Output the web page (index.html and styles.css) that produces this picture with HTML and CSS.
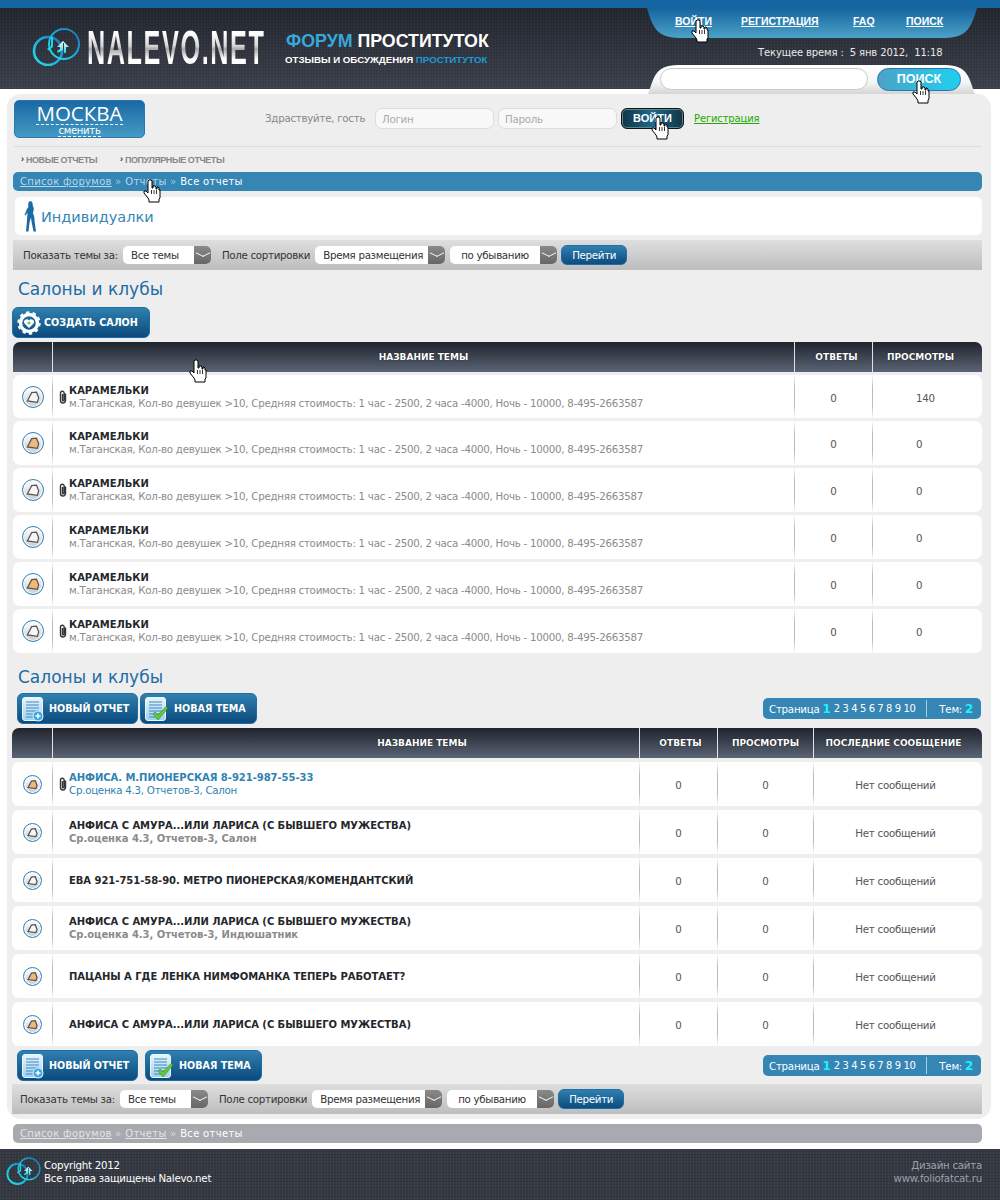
FILE: index.html
```html
<!DOCTYPE html>
<html lang="ru">
<head>
<meta charset="utf-8">
<title>Nalevo.net</title>
<link rel="stylesheet" href="styles.css">
</head>
<body>
<svg class="defs" width="0" height="0">
  <defs>
    <linearGradient id="lg" x1="0" y1="1" x2="1" y2="0"><stop offset="0" stop-color="#1fe6f2"/><stop offset=".6" stop-color="#19a6d8"/><stop offset="1" stop-color="#1a6fae"/></linearGradient>
    <linearGradient id="arr" x1="0" y1="0" x2="0" y2="1"><stop offset="0" stop-color="#fff"/><stop offset="1" stop-color="#1fd3ea"/></linearGradient>
    <linearGradient id="doc" x1="0" y1="0" x2="0" y2="1"><stop offset="0" stop-color="#e8f4fb"/><stop offset="1" stop-color="#9fd0ee"/></linearGradient>
    <symbol id="hand" viewBox="0 0 18 24">
      <path d="M6 1h2l1 1v7h1V7h2l1 1v2h1V8h1l1 1v2h1v8l-1 1v3H6v-2l-1-2-4-5v-2h2l2 2V2z" fill="#fff" stroke="#000" stroke-width="1"/>
      <path d="M8.500 11v4M11 11v4M13.500 11v4" stroke="#000" stroke-width=".8"/>
    </symbol>
    <symbol id="logo" viewBox="0 0 50 38">
      <circle cx="16" cy="23" r="14" fill="none" stroke="url(#lg)" stroke-width="2.600"/>
      <circle cx="32" cy="16" r="15" fill="none" stroke="url(#lg)" stroke-width="2"/>
      <path d="M19 9v9l-4 3 1.500 1.500 4.500-3.500V9z" fill="#1fd3ea"/>
      <path d="M31 13l-6 6h3v2l-3 2 1 2 5-3 0-7h1l0 10h2V19h3z" fill="url(#arr)"/>
    </symbol>
    <symbol id="clip" viewBox="0 0 8 14">
      <path d="M6.500 3.500v7a2.500 2.500 0 0 1-5 0V3a1.800 1.800 0 0 1 3.600 0v7a.8.8 0 0 1-1.600 0V4" fill="none" stroke="#33363b" stroke-width="1.400"/>
    </symbol>
    <symbol id="doc-icon" viewBox="0 0 22 24">
      <rect x=".5" y=".5" width="20" height="23" rx="2.500" fill="url(#doc)" stroke="#eaf5fb"/>
      <path d="M4 5h13M4 8h13M4 11h13M4 14h13M4 17h13M4 20h10" stroke="#3d88c4" stroke-width="1.200"/>
    </symbol>
    <symbol id="thumb" viewBox="0 0 16 16">
      <path d="M1.500 12.500L6.500 3 12 2.500 14.500 9 13 14z"/>
    </symbol>
  </defs>
</svg>

<header class="site-header">
  <div class="brand">
    <svg class="brand-logo"><use href="#logo"/></svg>
    <div class="brand-name"><span class="brand-text">NALEVO.NET</span></div>
    <div class="tagline">
      <div class="tagline-top"><span class="accent">ФОРУМ</span> ПРОСТИТУТОК</div>
      <div class="tagline-sub">ОТЗЫВЫ И ОБСУЖДЕНИЯ <span class="accent2">ПРОСТИТУТОК</span></div>
    </div>
  </div>
  <div class="header-side">
    <nav class="top-tabs">
      <a class="tab tab-login">ВОЙТИ</a>
      <a class="tab tab-reg">РЕГИСТРАЦИЯ</a>
      <a class="tab tab-faq">FAQ</a>
      <a class="tab">ПОИСК</a>
    </nav>
    <div class="clock">Текущее время :&nbsp; 5 янв 2012,&nbsp; 11:18</div>
    <div class="search-panel">
      <div class="search-input"></div>
      <div class="search-btn">ПОИСК</div>
    </div>
  </div>
</header>

<main class="panel">
  <div class="login-row">
    <div class="city"><span class="city-name">МОСКВА</span><span class="city-change">сменить</span></div>
    <div class="greet">Здраствуйте, гость</div>
    <div class="field">Логин</div>
    <div class="field">Пароль</div>
    <div class="login-btn">ВОЙТИ</div>
    <a class="reg-link">Регистрация</a>
  </div>
  <nav class="sub-nav">
    <a class="sub-link sub-first">НОВЫЕ ОТЧЕТЫ</a>
    <a class="sub-link">ПОПУЛЯРНЫЕ ОТЧЕТЫ</a>
  </nav>
  <div class="crumbs"><a class="crumb-link">Список форумов</a> <span class="raquo">»</span> <a>Отчеты</a> <span class="raquo">»</span> <span class="crumb-now">Все отчеты</span></div>
  <div class="category">
    <svg class="lady" viewBox="0 0 16 31"><path d="M7 0c1.500 0 2.500 1 2.500 2.500 0 1 .5 2 .5 3 1 1 1 2.500 .5 4 0 1-.5 2-.5 3 1 1.500 1.500 4 1.500 7l1.500 11h-2.500l-2-10-.5-4-1.500 5-1 9H3l1-11c0-3 .5-6 .5-8l-2 3-1-.5 2.500-6c.5-1 1-1.500 1.500-2-.5-1.500-.5-6 2-6z" fill="#1c6aa4"/></svg>
    <span class="category-name">Индивидуалки</span>
  </div>
  <div class="filter">
    <span>Показать темы за:</span>
    <div class="select s1">Все темы<i class="arrow"></i></div>
    <span class="filter-label">Поле сортировки</span>
    <div class="select s2">Время размещения<i class="arrow"></i></div>
    <div class="select s3">по убыванию<i class="arrow"></i></div>
    <div class="go">Перейти</div>
  </div>
  <h2 class="section-title">Салоны и клубы</h2>
  <div class="btn-row">
    <a class="btn btn-create">
      <svg class="gear" viewBox="0 0 24 24">
        <circle cx="12" cy="12" r="8.500" fill="none" stroke="#fff" stroke-width="3.400"/>
        <circle cx="12" cy="12" r="10.500" fill="none" stroke="#fff" stroke-width="2.400" stroke-dasharray="3.300 3.300"/>
        <path d="M12 17l-4.500-4.500a2.700 2.700 0 0 1 4.500-3 2.700 2.700 0 0 1 4.500 3z" fill="#fff"/>
        <path d="M12 10.500v3M10.500 12h3" stroke="#35c21e" stroke-width="1.100"/>
      </svg>
      СОЗДАТЬ САЛОН
    </a>
  </div>

  <section class="topics t1">
    <div class="thead"><div></div><div>НАЗВАНИЕ ТЕМЫ</div><div class="th-a">ОТВЕТЫ</div><div class="th-v">ПРОСМОТРЫ</div></div>
    <div class="trow"><div class="c-ic"><span class="topic-ic"><svg><use href="#thumb"/></svg></span></div><div class="c-t"><svg class="clip"><use href="#clip"/></svg><div class="t-title">КАРАМЕЛЬКИ</div><div class="t-sub">м.Таганская, Кол-во девушек &gt;10, Средняя стоимость: 1 час - 2500, 2 часа -4000, Ночь - 10000, 8-495-2663587</div></div><div class="c-n">0</div><div class="c-n c-v">140</div></div>
    <div class="trow"><div class="c-ic"><span class="topic-ic hot"><svg><use href="#thumb"/></svg></span></div><div class="c-t"><div class="t-title">КАРАМЕЛЬКИ</div><div class="t-sub">м.Таганская, Кол-во девушек &gt;10, Средняя стоимость: 1 час - 2500, 2 часа -4000, Ночь - 10000, 8-495-2663587</div></div><div class="c-n">0</div><div class="c-n c-v">0</div></div>
    <div class="trow"><div class="c-ic"><span class="topic-ic"><svg><use href="#thumb"/></svg></span></div><div class="c-t"><svg class="clip"><use href="#clip"/></svg><div class="t-title">КАРАМЕЛЬКИ</div><div class="t-sub">м.Таганская, Кол-во девушек &gt;10, Средняя стоимость: 1 час - 2500, 2 часа -4000, Ночь - 10000, 8-495-2663587</div></div><div class="c-n">0</div><div class="c-n c-v">0</div></div>
    <div class="trow"><div class="c-ic"><span class="topic-ic"><svg><use href="#thumb"/></svg></span></div><div class="c-t"><div class="t-title">КАРАМЕЛЬКИ</div><div class="t-sub">м.Таганская, Кол-во девушек &gt;10, Средняя стоимость: 1 час - 2500, 2 часа -4000, Ночь - 10000, 8-495-2663587</div></div><div class="c-n">0</div><div class="c-n c-v">0</div></div>
    <div class="trow"><div class="c-ic"><span class="topic-ic hot"><svg><use href="#thumb"/></svg></span></div><div class="c-t"><div class="t-title">КАРАМЕЛЬКИ</div><div class="t-sub">м.Таганская, Кол-во девушек &gt;10, Средняя стоимость: 1 час - 2500, 2 часа -4000, Ночь - 10000, 8-495-2663587</div></div><div class="c-n">0</div><div class="c-n c-v">0</div></div>
    <div class="trow"><div class="c-ic"><span class="topic-ic"><svg><use href="#thumb"/></svg></span></div><div class="c-t"><svg class="clip"><use href="#clip"/></svg><div class="t-title">КАРАМЕЛЬКИ</div><div class="t-sub">м.Таганская, Кол-во девушек &gt;10, Средняя стоимость: 1 час - 2500, 2 часа -4000, Ночь - 10000, 8-495-2663587</div></div><div class="c-n">0</div><div class="c-n c-v">0</div></div>
  </section>

  <h2 class="section-title second">Салоны и клубы</h2>
  <div class="toolbar">
    <div class="btn-group">
      <a class="btn btn-report"><svg class="doc"><use href="#doc-icon"/><circle cx="17" cy="19" r="5" fill="#3ea5de" stroke="#dff2fb"/><path d="M14.500 19h5M17 16.500v5" stroke="#fff" stroke-width="1.500"/></svg>НОВЫЙ ОТЧЕТ</a>
      <a class="btn btn-topic"><svg class="doc"><use href="#doc-icon"/><path d="M9 17l5 6 10-12-2-1.500-8 8.500-3-3z" fill="#62c93a" stroke="#2f8a1c" stroke-width=".6"/></svg>НОВАЯ ТЕМА</a>
    </div>
    <div class="pager">Страница <b>1</b> <span class="pages">2 3 4 5 6 7 8 9 10</span><i class="pager-sep"></i>Тем: <b class="b2">2</b></div>
  </div>

  <section class="topics t2">
    <div class="thead"><div></div><div class="th-name">НАЗВАНИЕ ТЕМЫ</div><div class="th-a2">ОТВЕТЫ</div><div>ПРОСМОТРЫ</div><div class="th-l">ПОСЛЕДНИЕ СООБЩЕНИЕ</div></div>
    <div class="trow"><div class="c-ic"><span class="topic-ic small hot"><svg><use href="#thumb"/></svg></span></div><div class="c-t"><svg class="clip"><use href="#clip"/></svg><div class="t-title link">АНФИСА. М.ПИОНЕРСКАЯ 8-921-987-55-33</div><div class="t-sub link">Ср.оценка 4.3, Отчетов-3, Салон</div></div><div class="c-n">0</div><div class="c-n">0</div><div class="c-n c-l">Нет сообщений</div></div>
    <div class="trow"><div class="c-ic"><span class="topic-ic small"><svg><use href="#thumb"/></svg></span></div><div class="c-t"><div class="t-title">АНФИСА С АМУРА...ИЛИ ЛАРИСА (С БЫВШЕГО МУЖЕСТВА)</div><div class="t-sub strong">Ср.оценка 4.3, Отчетов-3, Салон</div></div><div class="c-n">0</div><div class="c-n">0</div><div class="c-n c-l">Нет сообщений</div></div>
    <div class="trow"><div class="c-ic"><span class="topic-ic small"><svg><use href="#thumb"/></svg></span></div><div class="c-t"><div class="t-title">ЕВА 921-751-58-90. МЕТРО ПИОНЕРСКАЯ/КОМЕНДАНТСКИЙ</div></div><div class="c-n">0</div><div class="c-n">0</div><div class="c-n c-l">Нет сообщений</div></div>
    <div class="trow"><div class="c-ic"><span class="topic-ic small"><svg><use href="#thumb"/></svg></span></div><div class="c-t"><div class="t-title">АНФИСА С АМУРА...ИЛИ ЛАРИСА (С БЫВШЕГО МУЖЕСТВА)</div><div class="t-sub strong">Ср.оценка 4.3, Отчетов-3, Индюшатник</div></div><div class="c-n">0</div><div class="c-n">0</div><div class="c-n c-l">Нет сообщений</div></div>
    <div class="trow"><div class="c-ic"><span class="topic-ic small hot"><svg><use href="#thumb"/></svg></span></div><div class="c-t"><div class="t-title">ПАЦАНЫ А ГДЕ ЛЕНКА НИМФОМАНКА ТЕПЕРЬ РАБОТАЕТ?</div></div><div class="c-n">0</div><div class="c-n">0</div><div class="c-n c-l">Нет сообщений</div></div>
    <div class="trow"><div class="c-ic"><span class="topic-ic small hot"><svg><use href="#thumb"/></svg></span></div><div class="c-t"><div class="t-title">АНФИСА С АМУРА...ИЛИ ЛАРИСА (С БЫВШЕГО МУЖЕСТВА)</div></div><div class="c-n">0</div><div class="c-n">0</div><div class="c-n c-l">Нет сообщений</div></div>
  </section>

  <div class="toolbar bottom">
    <div class="btn-group wide">
      <a class="btn btn-report"><svg class="doc"><use href="#doc-icon"/><circle cx="17" cy="19" r="5" fill="#3ea5de" stroke="#dff2fb"/><path d="M14.500 19h5M17 16.500v5" stroke="#fff" stroke-width="1.500"/></svg>НОВЫЙ ОТЧЕТ</a>
      <a class="btn btn-topic"><svg class="doc"><use href="#doc-icon"/><path d="M9 17l5 6 10-12-2-1.500-8 8.500-3-3z" fill="#62c93a" stroke="#2f8a1c" stroke-width=".6"/></svg>НОВАЯ ТЕМА</a>
    </div>
    <div class="pager">Страница <b>1</b> <span class="pages">2 3 4 5 6 7 8 9 10</span><i class="pager-sep"></i>Тем: <b class="b2">2</b></div>
  </div>
  <div class="filter filter-bottom">
    <span>Показать темы за:</span>
    <div class="select s1">Все темы<i class="arrow"></i></div>
    <span class="filter-label">Поле сортировки</span>
    <div class="select s2">Время размещения<i class="arrow"></i></div>
    <div class="select s3">по убыванию<i class="arrow"></i></div>
    <div class="go">Перейти</div>
  </div>
</main>

<div class="crumbs crumbs-bottom"><a class="crumb-link">Список форумов</a> <span class="raquo">»</span> <a class="crumb-link">Отчеты</a> <span class="raquo">»</span> <span class="crumb-now">Все отчеты</span></div>

<footer class="site-footer">
  <svg class="foot-logo"><use href="#logo"/></svg>
  <div class="foot-copy">Copyright 2012<br>Все права защищены Nalevo.net</div>
  <div class="foot-design">Дизайн сайта<br>www.foliofatcat.ru</div>
</footer>

<svg class="cursor c1"><use href="#hand"/></svg>
<svg class="cursor c2"><use href="#hand"/></svg>
<svg class="cursor c3"><use href="#hand"/></svg>
<svg class="cursor c4"><use href="#hand"/></svg>
<svg class="cursor c5"><use href="#hand"/></svg>
</body>
</html>
```

FILE: styles.css
```css
* { box-sizing: border-box; }
html, body { margin: 0; padding: 0; }
body {
  position: relative;
  width: 1000px;
  height: 1200px;
  overflow: hidden;
  background: #fff;
  font-family: "DejaVu Sans", sans-serif;
  font-size: 10.250px;
  letter-spacing: -.26px;
  color: #333;
}
.defs { position: absolute; }
a { color: inherit; }

/* header */
.site-header {
  height: 89px;
  border-top: 8px solid #1665a3;
  display: flex;
  justify-content: space-between;
  color: #fff;
  background:
    repeating-linear-gradient(90deg, rgba(255,255,255,.025) 0 1px, transparent 1px 3px),
    repeating-linear-gradient(0deg, rgba(0,0,0,.08) 0 1px, transparent 1px 3px),
    linear-gradient(#22262f, #3c424d);
}
.brand { display: flex; align-items: flex-start; padding-left: 32px; }
.brand-logo { width: 50px; height: 38px; margin-top: 20px; }
.brand-name { width: 178px; margin: 14px 0 0 5px; }
.brand-text {
  display: inline-block;
  font-family: "Liberation Sans", sans-serif;
  font-size: 49px;
  line-height: 50px;
  font-weight: 700;
  letter-spacing: 3px;
  white-space: nowrap;
  transform: scaleX(.516);
  transform-origin: left top;
  background: linear-gradient(#fff 22%, #d5d5d5 48%, #a8a8a8 54%, #fff 75%);
  -webkit-background-clip: text;
  background-clip: text;
  color: transparent;
}
.tagline { margin: 23px 0 0 21px; font-family: "Liberation Sans", sans-serif; font-weight: 700; letter-spacing: 0; }
.tagline-top { font-size: 17.800px; line-height: 21px; white-space: nowrap; }
.tagline-sub { font-size: 9.700px; line-height: 14px; margin: 1px 0 0 -1px; white-space: nowrap; }
.accent { color: #37a8db; }
.accent2 { color: #1f9ad8; }

.header-side { width: 353px; flex: none; position: relative; z-index: 2; height: 86px; }
.top-tabs {
  width: 330px;
  height: 30px;
  display: flex;
  padding: 7px 0 0 28px;
  background: linear-gradient(#16639f, #4aa3c8);
  clip-path: path('M0 0H330C325 16 322 30 298 30H32C8 30 5 16 0 0Z');
  font-family: "Liberation Sans", sans-serif;
  font-weight: 700;
  font-size: 10.500px;
  letter-spacing: 0;
  line-height: 13px;
}
.tab { text-decoration: underline; white-space: nowrap; }
.tab-login { width: 66px; }
.tab-reg { width: 112px; }
.tab-faq { width: 53px; }
.clock {
  margin: 8px 0 0 111px;
  line-height: 14px;
  font-size: 10px;
  letter-spacing: -.13px;
  color: #e8e8e8;
  white-space: nowrap;
}
.search-panel {
  margin: 5px 0 0 1px;
  width: 327px;
  height: 29px;
  display: flex;
  padding: 3px 0 0 12px;
  background: linear-gradient(#fff, #f5f5f5 60%, #d5d5d5);
  clip-path: path('M0 29C6 14 6 0 30 0H297C321 0 321 14 327 29Z');
}
.search-input {
  width: 208px;
  height: 22px;
  border: 1px solid #c9c9d2;
  border-radius: 11px;
  background: #fff;
}
.search-btn {
  margin-left: 9px;
  width: 84px;
  height: 23px;
  border: 1px solid #2c74ad;
  border-radius: 12px;
  background: linear-gradient(90deg, #4aa3c8, #20cfee);
  color: #fff;
  font-family: "Liberation Sans", sans-serif;
  font-weight: 700;
  font-size: 12.500px;
  letter-spacing: 0;
  line-height: 21px;
  text-align: center;
}

/* panel */
.panel {
  margin: 5px 0 0 7px;
  width: 984px;
  height: 1025px;
  padding: 6px 9px 0 6px;
  background: #eee;
  border-radius: 14px;
}
.login-row {
  height: 47px;
  margin-left: 1px;
  padding-bottom: 8px;
  border-bottom: 1px solid #dedede;
  display: flex;
  align-items: flex-start;
}
.city {
  width: 131px;
  height: 38px;
  border: 1px solid #2a77ad;
  border-radius: 5px;
  background: linear-gradient(#1a68a5, #449bc4);
  color: #fff;
  text-align: center;
  display: flex;
  flex-direction: column;
  align-items: center;
}
.city-name {
  font-family: "Open Sans", sans-serif;
  font-size: 20.500px;
  letter-spacing: 0;
  line-height: 22px;
  border-bottom: 1px dashed #fff;
  height: 23px;
  margin-top: 1px;
}
.city-change { font-size: 10px; line-height: 11px; border-bottom: 1px dashed #fff; }
.greet { margin: 11px 0 0 120px; width: 110px; line-height: 14px; color: #888; white-space: nowrap; }
.field {
  width: 119px;
  height: 21px;
  margin: 8px 4px 0 0;
  padding-left: 6px;
  border: 1px solid #ddd;
  border-radius: 7px;
  background: #f8f8f8;
  color: #aaa;
  line-height: 20px;
}
.login-btn {
  width: 63px;
  height: 21px;
  margin: 8px 0 0 0;
  border: 1px solid #111;
  border-radius: 6px;
  box-shadow: inset 0 0 0 1px #5d8a8c;
  background: linear-gradient(90deg, #123344, #1c6a8e 50%, #123344);
  color: #fff;
  font-family: "Liberation Sans", sans-serif;
  font-weight: 700;
  font-size: 11px;
  letter-spacing: 0;
  line-height: 19px;
  text-align: center;
}
.reg-link { margin: 12px 0 0 10px; color: #22a800; text-decoration: underline; line-height: 13px; font-size: 10px; letter-spacing: -.15px; white-space: nowrap; }
.sub-nav {
  height: 25px;
  display: flex;
  align-items: center;
  padding-left: 8px;
  color: #888;
  font-family: "Liberation Sans", sans-serif;
  font-weight: 700;
  font-size: 9px;
  letter-spacing: -.45px;
}
.sub-link { white-space: nowrap; padding-left: 5px; position: relative; }
.sub-link::before { content: "›"; position: absolute; left: 0; top: -1px; color: #333; }
.sub-first { width: 99px; }
.crumbs {
  height: 19px;
  padding-left: 7px;
  border-radius: 5px;
  background: #3585b5;
  color: #b9d8ea;
  font-size: 10px;
  line-height: 19px;
  letter-spacing: .32px;
  white-space: nowrap;
}
.crumb-link { text-decoration: underline; }
.crumb-now { color: #fff; }
.raquo { opacity: .8; }
.category {
  height: 38px;
  margin: 6px 0 0 2px;
  padding: 2px 0 0 8px;
  border-radius: 5px;
  background: #fff;
  display: flex;
  align-items: center;
}
.lady { width: 16px; height: 31px; margin: -2px 2px 0 0; flex: none; }
.category-name { font-size: 14.500px; letter-spacing: 0; color: #3585b5; }
.filter {
  height: 30px;
  margin-top: 5px;
  padding-left: 10px;
  display: flex;
  align-items: center;
  background: linear-gradient(#dedede, #bdbdbd);
  color: #333;
  letter-spacing: -.3px;
  white-space: nowrap;
}
.filter-bottom { margin: 3px 0 0 -1px; padding-left: 8px; }
.select {
  position: relative;
  height: 18px;
  margin-left: 5px;
  padding-left: 8px;
  border-radius: 5px;
  background: #fff;
  line-height: 18px;
}
.s1 { width: 88px; }
.s2 { width: 130px; }
.s3 { width: 107px; padding-left: 11px; }
.arrow {
  position: absolute;
  right: 0;
  top: 0;
  width: 17px;
  height: 18px;
  border-radius: 0 5px 5px 0;
  background: linear-gradient(#8a8a8a, #666);
}
.arrow::after {
  content: "";
  position: absolute;
  left: 5px;
  top: 3px;
  width: 7px;
  height: 7px;
  border-right: 1px solid #fff;
  border-bottom: 1px solid #fff;
  transform: rotate(45deg) skew(-18deg, -18deg);
}
.filter-label { margin-left: 11px; }
.go {
  width: 66px;
  height: 20px;
  margin-left: 4px;
  border: 1px solid #1f6da6;
  border-radius: 6px;
  background: linear-gradient(#2f80b0, #0c4c7e);
  color: #fff;
  line-height: 18px;
  text-align: center;
}
.section-title {
  height: 37px;
  margin: 0 0 0 5px;
  color: #1d6ca5;
  font-size: 17px;
  letter-spacing: 0;
  font-weight: 400;
  line-height: 38px;
}
.second { height: 35px; margin-top: 5px; }
.btn-row { height: 31px; margin-left: -1px; }
.btn {
  height: 31px;
  display: inline-flex;
  align-items: center;
  border: 1px solid #1f6da6;
  border-radius: 6px;
  background: linear-gradient(#2f80b0, #0b4a7c);
  color: #fff;
  font-family: "DejaVu Sans", sans-serif;
  font-weight: 700;
  font-size: 9.600px;
  letter-spacing: 0;
  white-space: nowrap;
}
.btn-create { width: 138px; padding-left: 4px; }
.gear { width: 24px; height: 24px; margin-right: 3px; flex: none; }
.btn-report { width: 121px; padding-left: 3px; }
.btn-topic { width: 117px; padding-left: 3px; }
.doc { width: 24px; height: 24px; margin-right: 4px; flex: none; overflow: visible; }
.btn-topic .doc { margin-right: 6px; }

.topics { margin-top: 4px; }
.t2 { margin: 4px 0 0 -1px; }
.thead {
  height: 30px;
  display: grid;
  border-radius: 7px 7px 0 0;
  background: linear-gradient(#20242d, #5a6475);
  color: #fff;
  font-weight: 700;
  font-size: 9px;
  letter-spacing: 0;
  line-height: 30px;
  text-align: center;
  text-shadow: 0 0 1px #000;
}
.thead > div + div { border-left: 1px solid #dfe3e8; }
.t1 .thead, .t1 .trow { grid-template-columns: 39px 742px 78px 110px; }
.t2 .thead, .t2 .trow { grid-template-columns: 40px 587px 78px 96px 168px; }
.th-a { padding-left: 6px; }
.th-v { padding-right: 14px; }
.th-name { padding-left: 152px; }
.th-a2 { padding-left: 4px; }
.th-l { padding-right: 8px; }
.trow {
  height: 44px;
  margin-top: 4px;
  display: grid;
  border-radius: 7px;
  background: #fff;
}
.t1 .trow { margin-top: 3px; }
.t1 .thead + .trow { height: 43px; }
.trow > div + div {
  border-left: 1px solid;
  border-image: linear-gradient(transparent, #bbb 30%, #bbb 70%, transparent) 1;
}
.c-ic { display: flex; align-items: center; justify-content: center; }
.topic-ic {
  width: 22px;
  height: 22px;
  padding: 3px;
  border: 1px solid #2f7fb3;
  border-radius: 50%;
  background: linear-gradient(#fff, #c9ced2);
  box-shadow: inset 0 0 0 1px #fff;
}
.topic-ic svg { display: block; width: 14px; height: 14px; fill: #f6f6f6; stroke: #555; stroke-width: 1.400; }
.topic-ic.hot svg { fill: #f3b878; }
.topic-ic.small { width: 19px; height: 19px; padding: 3px; }
.topic-ic.small svg { width: 11px; height: 11px; stroke-width: 1.900; }
.c-t {
  position: relative;
  padding-left: 16px;
  display: flex;
  flex-direction: column;
  justify-content: center;
  white-space: nowrap;
}
.clip { position: absolute; left: 6px; top: 15px; width: 8px; height: 14px; }
.t-title { font-weight: 700; font-size: 10px; letter-spacing: -.04px; line-height: 13px; color: #24272c; }
.t-sub { line-height: 13px; color: #8b8b8b; }
.t-sub.strong { font-weight: 700; font-size: 10px; letter-spacing: -.04px; }
.t-title.link, .t-sub.link { color: #2f82b3; }
.c-n { display: flex; align-items: center; justify-content: center; padding-top: 2px; color: #555; }
.c-v { justify-content: flex-start; padding-left: 43px; }
.c-l { padding-right: 4px; }

.toolbar { display: flex; justify-content: space-between; align-items: center; height: 31px; margin-right: 1px; }
.toolbar .btn-group { display: flex; gap: 2px; margin-left: 4px; }
.toolbar .btn-group.wide { gap: 7px; }
.bottom { margin-top: 4px; }
.pager {
  height: 21px;
  width: 218px;
  padding-left: 6px;
  display: flex;
  align-items: center;
  gap: 3px;
  border-radius: 5px;
  background: #3585b5;
  color: #fff;
  white-space: nowrap;
}
.pager b { color: #1ff0ff; font-size: 12px; letter-spacing: 0; }
.pager .pages { font-size: 10px; letter-spacing: -.42px; }
.pager-sep {
  width: 1px;
  height: 17px;
  margin: 0 9px 0 8px;
  background: #a8cfe3;
}

.crumbs-bottom {
  width: 969px;
  margin: 5px 0 0 13px;
  background: #a7aaae;
  color: #e3e4e5;
}
.site-footer {
  position: absolute;
  left: 0;
  right: 0;
  bottom: 0;
  height: 51px;
  display: flex;
  color: #fff;
  background:
    repeating-linear-gradient(90deg, rgba(255,255,255,.04) 0 1px, transparent 1px 3px),
    repeating-linear-gradient(0deg, rgba(0,0,0,.12) 0 1px, transparent 1px 3px),
    #343942;
  line-height: 13px;
}
.foot-logo { width: 36px; height: 28px; margin: 8px 0 0 6px; }
.foot-copy { margin: 10px 0 0 2px; }
.foot-design { margin: 10px 18px 0 auto; text-align: right; color: #9ba1aa; }

/* cursors shown in the screenshot */
.cursor { position: absolute; width: 18px; height: 24px; z-index: 5; }
.c1 { left: 691px; top: 19px; }
.c2 { left: 912px; top: 80px; }
.c3 { left: 651px; top: 116px; }
.c4 { left: 143px; top: 179px; }
.c5 { left: 189px; top: 359px; }
```
